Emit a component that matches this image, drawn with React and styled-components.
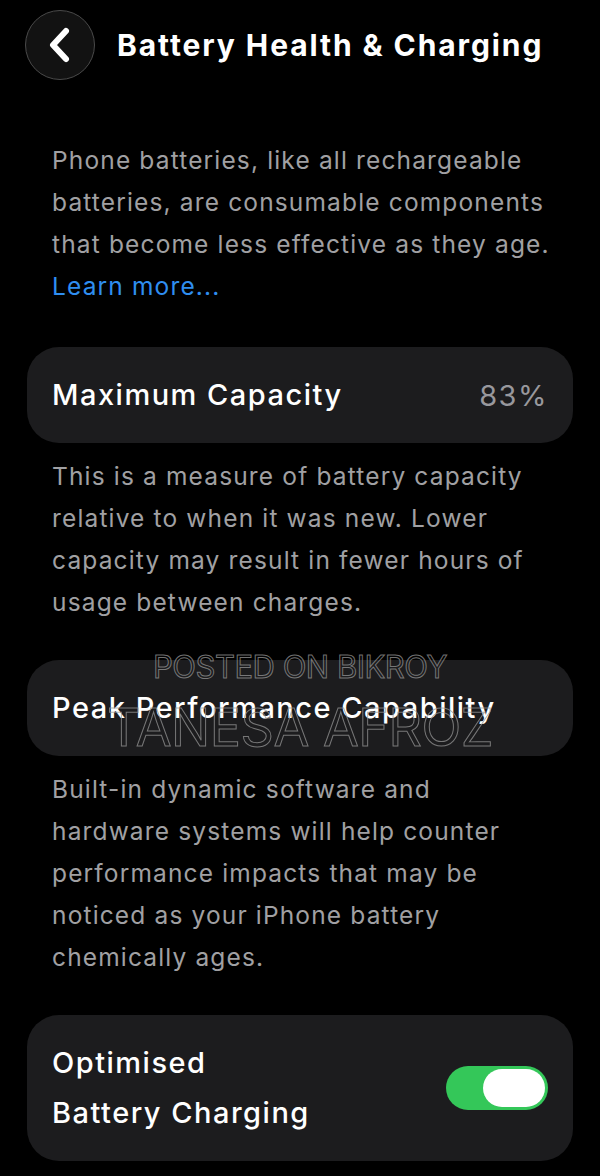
import React from "react";
import styled, { createGlobalStyle } from "styled-components";

const GlobalStyle = createGlobalStyle`
	body {
		margin: 0;
		background: #000;
		font-family: Inter, "Noto Sans", sans-serif;
		-webkit-font-smoothing: antialiased;
	}
`;

const Screen = styled.div`
	position: relative;
	width: 600px;
	height: 1176px;
	overflow: hidden;
	background: #000;
	padding: 10px 27px 0;
	box-sizing: border-box;
`;

const Header = styled.div`
	display: flex;
	align-items: center;
	height: 70px;
	margin-left: -2px;
`;

const BackButton = styled.button`
	width: 70px;
	height: 70px;
	border-radius: 50%;
	border: 1px solid #4a4a4a;
	background: #121212;
	display: flex;
	align-items: center;
	justify-content: center;
	padding: 0;
	cursor: pointer;
`;

const Title = styled.h1`
	margin: 0 0 0 22px;
	color: #fff;
	font-size: 30px;
	font-weight: 700;
	letter-spacing: 1.9px;
`;

const Note = styled.p`
	margin: ${(props) => props.$top || "12px"} 0 0;
	padding: 0 20px 0 25px;
	color: #a0a0a3;
	font-size: 24.5px;
	line-height: 42px;
	letter-spacing: 1.15px;
`;

const LinkText = styled.span`
	display: block;
	color: #2f8ef0;
`;

const Card = styled.div`
	display: flex;
	align-items: center;
	justify-content: space-between;
	height: ${(props) => props.$height || "96px"};
	margin-top: ${(props) => props.$top || "37px"};
	padding: 0 25px;
	background: #1c1c1e;
	border-radius: 32px;
`;

const CardLabel = styled.span`
	color: #fff;
	font-size: 29px;
	line-height: 50px;
	font-weight: 500;
	letter-spacing: 1.5px;
`;

const CardValue = styled.span`
	color: #98989d;
	font-size: 29px;
	letter-spacing: 1.5px;
`;

const Toggle = styled.div`
	width: 102px;
	height: 44px;
	border-radius: 22px;
	background: #34c759;
	display: flex;
	align-items: center;
	justify-content: flex-end;
	padding: 3px;
	box-sizing: border-box;
`;

const Knob = styled.div`
	width: 62px;
	height: 38px;
	border-radius: 19px;
	background: #fff;
`;

const Watermark = styled.div`
	position: absolute;
	left: 0;
	right: 0;
	top: ${(props) => props.$top};
	text-align: center;
	color: transparent;
	-webkit-text-stroke: 1px rgba(150, 150, 150, 0.75);
	font-size: ${(props) => props.$size};
	font-weight: 400;
	letter-spacing: -0.5px;
	pointer-events: none;
	white-space: nowrap;
`;

const App = () => {
	return (
		<Screen>
			<GlobalStyle />
			<Header>
				<BackButton>
					<svg width="30" height="40" viewBox="0 0 30 40">
						<path
							d="M21 6 L8 20 L21 34"
							fill="none"
							stroke="#fff"
							strokeWidth="6"
							strokeLinecap="round"
							strokeLinejoin="round"
						/>
					</svg>
				</BackButton>
				<Title>Battery Health &amp; Charging</Title>
			</Header>
			<Note $top="59px">
				Phone batteries, like all rechargeable batteries, are consumable
				components that become less effective as they age.
				<LinkText>Learn more...</LinkText>
			</Note>
			<Card $top="40px">
				<CardLabel>Maximum Capacity</CardLabel>
				<CardValue>83%</CardValue>
			</Card>
			<Note>
				This is a measure of battery capacity relative to when it was new.
				Lower capacity may result in fewer hours of usage between charges.
			</Note>
			<Card>
				<CardLabel>Peak Performance Capability</CardLabel>
			</Card>
			<Note>
				Built-in dynamic software and hardware systems will help counter
				performance impacts that may be noticed as your iPhone battery
				chemically ages.
			</Note>
			<Card $height="146px">
				<CardLabel>
					Optimised
					<br />
					Battery Charging
				</CardLabel>
				<Toggle>
					<Knob />
				</Toggle>
			</Card>
			<Watermark $top="648px" $size="31px">
				POSTED ON BIKROY
			</Watermark>
			<Watermark $top="696px" $size="52px">
				TANESA AFROZ
			</Watermark>
		</Screen>
	);
};

export default App;
